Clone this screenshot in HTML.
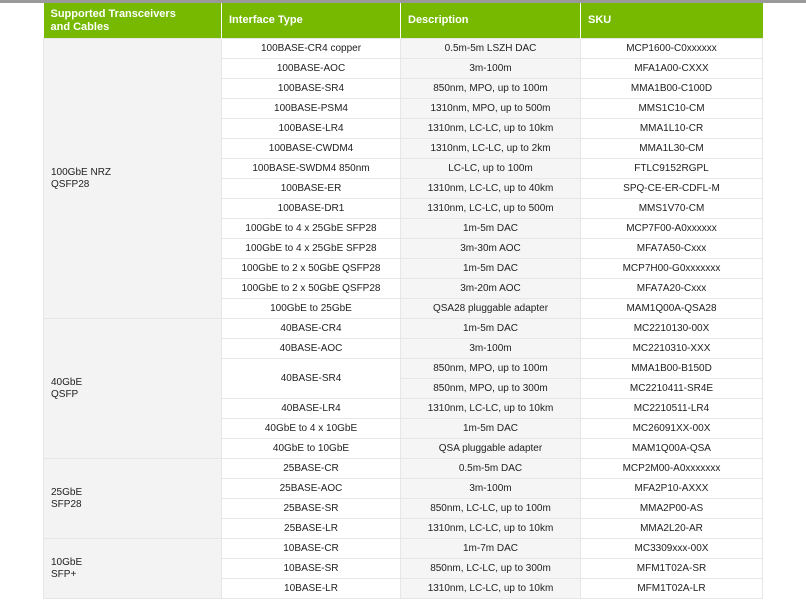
<!DOCTYPE html>
<html><head><meta charset="utf-8"><style>
html,body{margin:0;padding:0;background:#fff;width:806px;height:600px;overflow:hidden}
.top{position:absolute;left:0;top:0;width:806px;height:3px;background:#9a9a9a}
table{position:absolute;left:43px;top:3px;border-collapse:collapse;table-layout:fixed;width:719px;font-family:"Liberation Sans",sans-serif;font-size:10px;color:#222}
th{background:#76b900;color:#fff;font-weight:bold;font-size:11px;text-align:left;padding:0 7px;height:35px;border-left:1px solid #fff;line-height:13px}
th:first-child{border-left:none}
td{height:19px;padding:0;text-align:center;border:1px solid #e6e6e6;background:#fff;line-height:12px}
td.c{background:#f3f3f3;text-align:left;padding-left:7px;line-height:12px}
td.d{background:#f5f5f5}
</style></head><body>
<div class="top"></div>
<table>
<colgroup><col style="width:178px"><col style="width:179px"><col style="width:180px"><col style="width:182px"></colgroup>
<tr><th>Supported Transceivers<br>and Cables</th><th>Interface Type</th><th>Description</th><th>SKU</th></tr>
<tr><td class="c" rowspan="14">100GbE NRZ<br>QSFP28</td><td>100BASE-CR4 copper</td><td class="d">0.5m-5m LSZH DAC</td><td>MCP1600-C0xxxxxx</td></tr>
<tr><td>100BASE-AOC</td><td class="d">3m-100m</td><td>MFA1A00-CXXX</td></tr>
<tr><td>100BASE-SR4</td><td class="d">850nm, MPO, up to 100m</td><td>MMA1B00-C100D</td></tr>
<tr><td>100BASE-PSM4</td><td class="d">1310nm, MPO, up to 500m</td><td>MMS1C10-CM</td></tr>
<tr><td>100BASE-LR4</td><td class="d">1310nm, LC-LC, up to 10km</td><td>MMA1L10-CR</td></tr>
<tr><td>100BASE-CWDM4</td><td class="d">1310nm, LC-LC, up to 2km</td><td>MMA1L30-CM</td></tr>
<tr><td>100BASE-SWDM4 850nm</td><td class="d">LC-LC, up to 100m</td><td>FTLC9152RGPL</td></tr>
<tr><td>100BASE-ER</td><td class="d">1310nm, LC-LC, up to 40km</td><td>SPQ-CE-ER-CDFL-M</td></tr>
<tr><td>100BASE-DR1</td><td class="d">1310nm, LC-LC, up to 500m</td><td>MMS1V70-CM</td></tr>
<tr><td>100GbE to 4 x 25GbE SFP28</td><td class="d">1m-5m DAC</td><td>MCP7F00-A0xxxxxx</td></tr>
<tr><td>100GbE to 4 x 25GbE SFP28</td><td class="d">3m-30m AOC</td><td>MFA7A50-Cxxx</td></tr>
<tr><td>100GbE to 2 x 50GbE QSFP28</td><td class="d">1m-5m DAC</td><td>MCP7H00-G0xxxxxxx</td></tr>
<tr><td>100GbE to 2 x 50GbE QSFP28</td><td class="d">3m-20m AOC</td><td>MFA7A20-Cxxx</td></tr>
<tr><td>100GbE to 25GbE</td><td class="d">QSA28 pluggable adapter</td><td>MAM1Q00A-QSA28</td></tr>
<tr><td class="c" rowspan="7">40GbE<br>QSFP</td><td>40BASE-CR4</td><td class="d">1m-5m DAC</td><td>MC2210130-00X</td></tr>
<tr><td>40BASE-AOC</td><td class="d">3m-100m</td><td>MC2210310-XXX</td></tr>
<tr><td rowspan="2">40BASE-SR4</td><td class="d">850nm, MPO, up to 100m</td><td>MMA1B00-B150D</td></tr>
<tr><td class="d">850nm, MPO, up to 300m</td><td>MC2210411-SR4E</td></tr>
<tr><td>40BASE-LR4</td><td class="d">1310nm, LC-LC, up to 10km</td><td>MC2210511-LR4</td></tr>
<tr><td>40GbE to 4 x 10GbE</td><td class="d">1m-5m DAC</td><td>MC26091XX-00X</td></tr>
<tr><td>40GbE to 10GbE</td><td class="d">QSA pluggable adapter</td><td>MAM1Q00A-QSA</td></tr>
<tr><td class="c" rowspan="4">25GbE<br>SFP28</td><td>25BASE-CR</td><td class="d">0.5m-5m DAC</td><td>MCP2M00-A0xxxxxxx</td></tr>
<tr><td>25BASE-AOC</td><td class="d">3m-100m</td><td>MFA2P10-AXXX</td></tr>
<tr><td>25BASE-SR</td><td class="d">850nm, LC-LC, up to 100m</td><td>MMA2P00-AS</td></tr>
<tr><td>25BASE-LR</td><td class="d">1310nm, LC-LC, up to 10km</td><td>MMA2L20-AR</td></tr>
<tr><td class="c" rowspan="3">10GbE<br>SFP+</td><td>10BASE-CR</td><td class="d">1m-7m DAC</td><td>MC3309xxx-00X</td></tr>
<tr><td>10BASE-SR</td><td class="d">850nm, LC-LC, up to 300m</td><td>MFM1T02A-SR</td></tr>
<tr><td>10BASE-LR</td><td class="d">1310nm, LC-LC, up to 10km</td><td>MFM1T02A-LR</td></tr>
</table>
</body></html>
